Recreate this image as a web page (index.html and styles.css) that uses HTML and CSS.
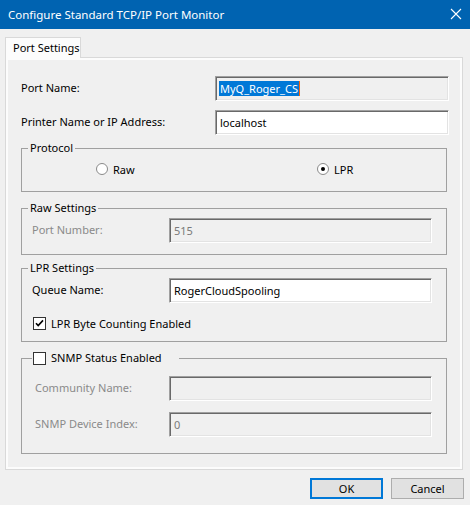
FILE: index.html
```html
<!DOCTYPE html>
<html>
<head>
<meta charset="utf-8">
<title>Configure Standard TCP/IP Port Monitor</title>
<link rel="stylesheet" href="styles.css">
</head>
<body>
<div class="window">
  <div class="titlebar">
    <span class="title">Configure Standard TCP/IP Port Monitor</span>
    <svg class="close" width="12" height="12" viewBox="0 0 12 12"><path d="M1 1 L11 11 M11 1 L1 11" stroke="#fff" stroke-width="1.1" fill="none"/></svg>
  </div>
  <div class="body">
    <div class="tabs"><div class="tab">Port Settings</div></div>
    <div class="panel">
      <div class="page">
        <div class="row first">
          <span class="label">Port Name:</span>
          <div class="edit readonly"><span class="sel">MyQ_Roger_CS</span><span class="caret"></span></div>
        </div>
        <div class="row second">
          <span class="label">Printer Name or IP Address:</span>
          <div class="edit">localhost</div>
        </div>

        <fieldset class="group protocol">
          <legend>Protocol</legend>
          <div class="radios">
            <div class="radio-item first-radio"><span class="radio"></span><span>Raw</span></div>
            <div class="radio-item"><span class="radio checked"></span><span>LPR</span></div>
          </div>
        </fieldset>

        <fieldset class="group raw">
          <legend>Raw Settings</legend>
          <div class="grow">
            <span class="glabel disabled">Port Number:</span>
            <div class="edit wide disabled-edit">515</div>
          </div>
        </fieldset>

        <fieldset class="group lpr">
          <legend>LPR Settings</legend>
          <div class="grow">
            <span class="glabel">Queue Name:</span>
            <div class="edit wide">RogerCloudSpooling</div>
          </div>
          <div class="check-row">
            <span class="checkbox"><svg width="11" height="11" viewBox="0 0 11 11"><path d="M2 5.2 L4.2 7.6 L9 2.4" stroke="#000" stroke-width="1.6" fill="none"/></svg></span>
            <span>LPR Byte Counting Enabled</span>
          </div>
        </fieldset>

        <fieldset class="group snmp">
          <legend class="check-legend"><span class="checkbox"></span><span>SNMP Status Enabled</span></legend>
          <div class="grow">
            <span class="glabel indent disabled">Community Name:</span>
            <div class="edit wide disabled-edit"></div>
          </div>
          <div class="grow second-field">
            <span class="glabel indent disabled">SNMP Device Index:</span>
            <div class="edit wide disabled-edit">0</div>
          </div>
        </fieldset>
      </div>
    </div>
    <div class="buttons">
      <button class="btn default">OK</button>
      <button class="btn">Cancel</button>
    </div>
  </div>
</div>
</body>
</html>
```
FILE: styles.css
```css
* { box-sizing: border-box; }
html, body { margin: 0; padding: 0; }
body {
  background: #f0f0f0;
  font-family: "Noto Sans", "Liberation Sans", sans-serif;
  font-size: 11px;
  color: #000;
}
.window {
  width: 470px;
  height: 505px;
  background: #f0f0f0;
  display: flex;
  flex-direction: column;
  overflow: hidden;
}
.titlebar {
  height: 29px;
  background: #0063b1;
  color: #fff;
  display: flex;
  align-items: center;
  justify-content: space-between;
  padding: 0 8px 1px 8px;
}
.title { font-size: 11.5px; }
.body {
  padding: 8px 7px 0 5px;
  display: flex;
  flex-direction: column;
}
.tabs { display: flex; height: 20px; }
.tab {
  position: relative;
  z-index: 1;
  width: 76px;
  height: 21px;
  background: #fcfcfc;
  border: 1px solid #d9d9d9;
  border-bottom: none;
  padding: 2px 0 0 7px;
  line-height: 16px;
}
.panel {
  height: 413px;
  border: 1px solid #d9d9d9;
  background: #fcfcfc;
  padding: 2px;
}
.page {
  height: 100%;
  background: #f0f0f0;
  display: flex;
  flex-direction: column;
  padding: 0 13px;
}
.row {
  display: flex;
  align-items: center;
  height: 25px;
  margin-right: -2px;
}
.row.first { margin-top: 16px; }
.row.second { margin-top: 9px; }
.label { width: 194px; margin-top: -3px; flex: none; }
.edit {
  width: 234px;
  height: 25px;
  background: #fff;
  border: 1px solid;
  border-color: #a0a0a0 #fff #fff #a0a0a0;
  box-shadow: inset 1px 1px 0 #696969, inset -1px -1px 0 #e3e3e3;
  padding: 0 3px 0 4px;
  line-height: 22px;
  display: flex;
  align-items: center;
  white-space: nowrap;
  flex: none;
}
.edit.readonly { background: #f0f0f0; }
.sel {
  background: #0078d7;
  color: #fff;
  padding: 0 1px;
  line-height: 15px;
  height: 15px;
  margin-left: -1px;
}
.caret {
  display: inline-block;
  width: 1px;
  height: 15px;
  background: #f7630c;
}
.group {
  margin: 0;
  border: 1px solid #a0a0a0;
  padding: 0 14px 0 10px;
  min-width: 0;
}
.group legend {
  margin-left: -4px;
  padding: 0 2px;
  line-height: 16px;
  height: 16px;
}
.protocol { margin-top: 5px; height: 52px; }
.raw { margin-top: 8px; height: 55px; }
.lpr { margin-top: 5px; height: 82px; }
.snmp { margin-top: 8px; height: 104px; }

.radios { display: flex; padding: 5px 0 0 64px; }
.radio-item {
  flex: 1;
  min-width: 0;
  display: flex;
  align-items: center;
  gap: 5px;
  height: 16px;
}
.radio-item.first-radio { flex: none; width: 221px; }
.radio {
  width: 12px;
  height: 12px;
  border-radius: 50%;
  border: 1px solid #8a8a8a;
  background: #fff;
  display: flex;
  align-items: center;
  justify-content: center;
  flex: none;
}
.radio.checked::after {
  content: "";
  width: 4px;
  height: 4px;
  border-radius: 50%;
  background: #000;
}
.grow {
  display: flex;
  align-items: center;
  margin-top: 2px;
  height: 25px;
}
.snmp .grow { margin-top: 10px; }
.snmp .grow.second-field { margin-top: 11px; }
.glabel { width: 137px; margin-top: -3px; flex: none; }
.glabel.indent { padding-left: 3px; }
.disabled { color: #8a8a8a; }
.edit.wide { width: 263px; }
.edit.disabled-edit { background: #f0f0f0; color: #7a7a7a; }

.check-row {
  display: flex;
  align-items: center;
  gap: 5px;
  height: 16px;
  margin-top: 12px;
  padding-left: 1px;
}
.checkbox {
  width: 13px;
  height: 13px;
  border: 1px solid #333;
  background: #fff;
  display: inline-flex;
  align-items: center;
  justify-content: center;
  flex: none;
}
.check-legend {
  display: flex;
  align-items: center;
  gap: 5px;
  margin-left: 0 !important;
  padding: 0 17px 0 1px !important;
}

.buttons {
  display: flex;
  justify-content: flex-end;
  gap: 8px;
  margin-top: 8px;
  margin-right: -1px;
}
.btn {
  width: 73px;
  height: 21px;
  font-family: inherit;
  font-size: 11px;
  background: #e1e1e1;
  border: 1px solid #adadad;
  color: #000;
  padding: 0;
  line-height: 17px;
}
.btn.default {
  border: 2px solid #0078d7;
}
```
